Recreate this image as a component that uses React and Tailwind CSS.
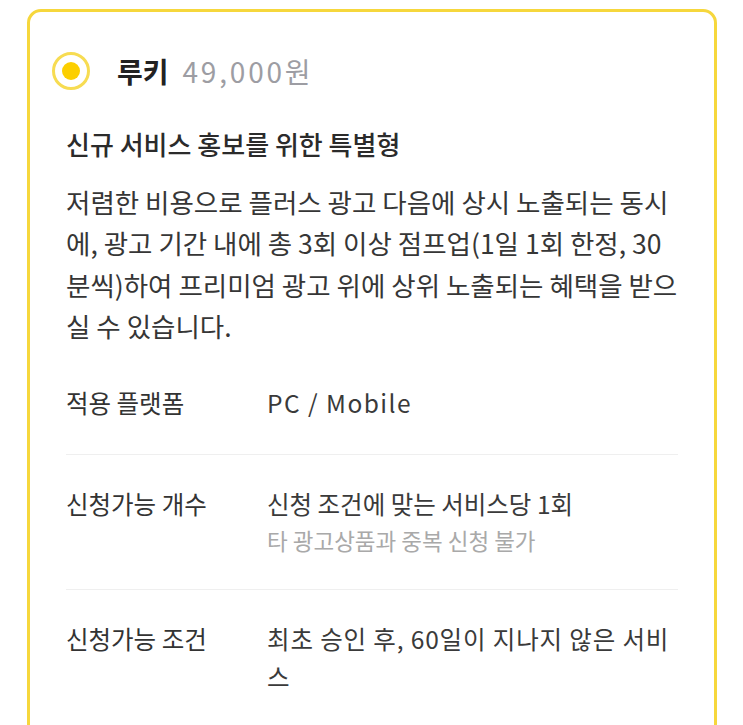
import React from "react";

const font = { fontFamily: '"Noto Sans CJK KR", "Noto Sans", sans-serif' };

const rows = [
  { label: "적용 플랫폼", value: "PC / Mobile", valueClass: "tracking-[0.06em]" },
  { label: "신청가능 개수", value: "신청 조건에 맞는 서비스당 1회", sub: "타 광고상품과 중복 신청 불가" },
  { label: "신청가능 조건", value: "최초 승인 후, 60일이 지나지 않은 서비스", valueClass: "tracking-[0.035em]" },
];

const App = () => {
  return (
    <div className="min-h-screen bg-white pt-[9px] pl-[27px] pr-[26px]" style={font}>
      <div className="rounded-[14px] border-[3px] border-[#f6d73c] px-9 pt-[40px] pb-10">
        {/* 상품명 */}
        <div className="-ml-[14px] flex items-center">
          <span className="flex h-[38px] w-[38px] items-center justify-center rounded-full border-[3px] border-[#f7dc52]">
            <span className="h-[18px] w-[18px] rounded-full bg-[#fccf00]" />
          </span>
          <span className="ml-[27px] text-[28px] font-bold leading-[38px] text-[#222]">루키</span>
          <span className="ml-[14px] text-[28px] leading-[38px] tracking-[0.1em] text-[#9d9da3]">49,000원</span>
        </div>

        <h2 className="mt-[36px] text-[26px] font-medium leading-[36px] text-[#2b2b2b]">
          신규 서비스 홍보를 위한 특별형
        </h2>
        <p className="mt-[19px] text-[26.5px] leading-[41.3px] text-[#363636]">
          저렴한 비용으로 플러스 광고 다음에 상시 노출되는 동시에, 광고 기간 내에 총 3회 이상 점프업(1일 1회 한정, 30분씩)하여 프리미엄 광고 위에 상위 노출되는 혜택을 받으실 수 있습니다.
        </p>

        <div className="mt-[8px]">
          {rows.map((row, i) => (
            <div
              key={row.label}
              className={`flex pt-[30px] pb-8 ${i < rows.length - 1 ? "border-b border-[#efefef]" : ""}`}
            >
              <div className="w-[201px] shrink-0 text-[24.5px] leading-[38px] text-[#333]">{row.label}</div>
              <div className="flex-1">
                <div className={`text-[24.5px] leading-[38px] text-[#3a3a3a] ${row.valueClass || ""}`}>{row.value}</div>
                {row.sub && <div className="text-[22.5px] leading-[34px] text-[#a9a9a9]">{row.sub}</div>}
              </div>
            </div>
          ))}
        </div>
      </div>
    </div>
  );
};

export default App;
